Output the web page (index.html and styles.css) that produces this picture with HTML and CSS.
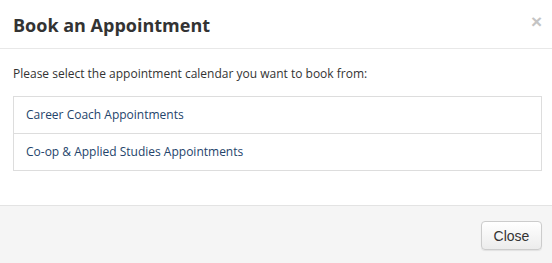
FILE: index.html
```html
<!DOCTYPE html>
<html>
<head>
<meta charset="utf-8">
<link rel="stylesheet" href="styles.css">
</head>
<body>
<div class="modal">
  <div class="modal-header">
    <h3 class="modal-title">Book an Appointment</h3>
    <span class="close">&times;</span>
  </div>
  <div class="modal-body">
    <p class="intro">Please select the appointment calendar you want to book from:</p>
    <ul class="calendar-list">
      <li class="calendar-item">Career Coach Appointments</li>
      <li class="calendar-item">Co-op &amp; Applied Studies Appointments</li>
    </ul>
  </div>
  <div class="modal-footer">
    <button class="btn">Close</button>
  </div>
</div>
</body>
</html>
```

FILE: styles.css
```css
html, body {
  margin: 0;
  padding: 0;
  background: #fff;
}
body {
  font-family: "Open Sans", "DejaVu Sans", sans-serif;
  color: #333;
}
.modal {
  width: 552px;
  height: 263px;
  display: flex;
  flex-direction: column;
  background: #fff;
}
.modal-header {
  height: 48px;
  border-bottom: 1px solid #e8e8e8;
  display: flex;
  align-items: center;
  justify-content: space-between;
  padding: 0 10px 0 13px;
}
.modal-title {
  margin: 0;
  font-size: 18px;
  font-weight: 700;
  color: #333;
  line-height: 20px;
  padding-top: 1px;
}
.close {
  font-family: "Liberation Sans", Arial, sans-serif;
  font-size: 19px;
  font-weight: 700;
  color: #c4c4c4;
  line-height: 1;
  margin-top: -6px;
}
.modal-body {
  flex: 1;
  padding: 0 10px 0 13px;
}
.intro {
  margin: 16px 0 0 0;
  font-size: 12px;
  line-height: 17px;
}
.calendar-list {
  list-style: none;
  margin: 14px 0 0 0;
  padding: 0;
  border: 1px solid #ddd;
}
.calendar-item {
  font-size: 12px;
  color: #24446b;
  height: 36px;
  line-height: 36px;
  padding-left: 12px;
}
.calendar-item + .calendar-item {
  border-top: 1px solid #ddd;
}
.modal-footer {
  background: #f5f5f5;
  border-top: 1px solid #e3e3e3;
  display: flex;
  justify-content: flex-end;
  align-items: flex-start;
  padding: 15px 10px 0 13px;
  box-sizing: border-box;
  height: 58px;
}
.btn {
  width: 61px;
  height: 29px;
  font-family: "Liberation Sans", Arial, sans-serif;
  font-size: 14px;
  color: #333;
  background: linear-gradient(#fff, #ececec);
  border: 1px solid #ccc;
  border-radius: 4px;
  box-shadow: 0 1px 1px rgba(0,0,0,0.08);
  padding: 0;
}
```
